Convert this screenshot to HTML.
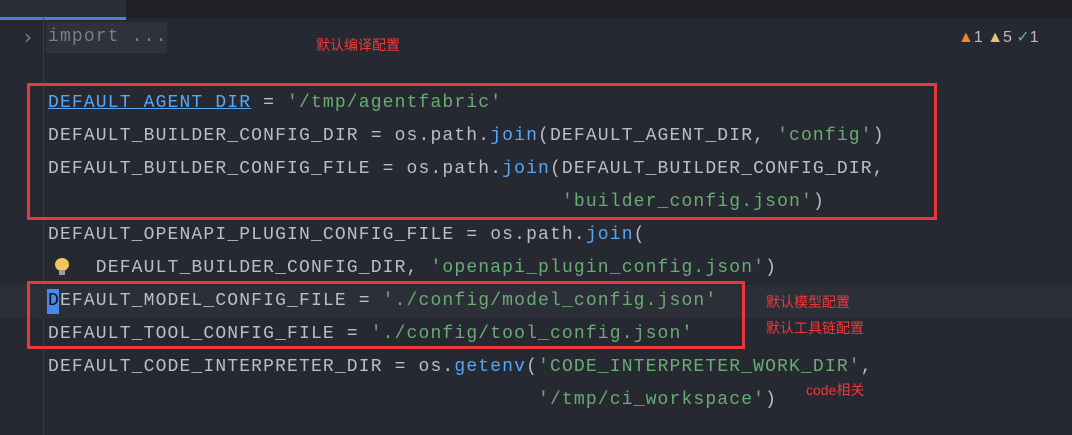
<!DOCTYPE html>
<html><head><meta charset="utf-8"><style>
html,body{margin:0;padding:0;}
body{width:1072px;height:435px;background:#262931;position:relative;overflow:hidden;font-family:"Liberation Mono",monospace;}
.top{position:absolute;left:0;top:0;width:1072px;height:18px;background:#1f2126;}
.tab{position:absolute;left:0;top:0;width:126px;height:17px;background:#2b2e36;border-bottom:3px solid #4a7fe0;}
.gut{position:absolute;left:43px;top:18px;width:1px;height:417px;background:#393b40;}
.cur{position:absolute;left:0;top:285px;width:1072px;height:33px;background:#2c2f37;}
.l{position:absolute;left:48px;font-size:18px;letter-spacing:1.15px;color:#bcbec4;white-space:pre;line-height:33px;height:33px;}
.s{color:#6aab73}.f{color:#56a8f5}.g{color:#7a7e85}
.box{position:absolute;border:3px solid #e8383b;box-sizing:border-box;}
.r{position:absolute;color:#f0383a;font-family:"Liberation Sans","Noto Sans CJK SC",sans-serif;font-size:14px;}
</style></head><body>
<div class="top"></div><div class="tab"></div>
<div class="gut"></div>
<div class="cur"></div>
<div style="position:absolute;left:46px;top:22px;width:121px;height:31px;background:#2f323a"></div>
<div style="position:absolute;left:24px;top:25px;color:#7a7e85;font-size:20px;font-family:'DejaVu Sans',sans-serif">›</div>
<div class="l g" style="top:21px">import ...</div>
<div class="l" style="top:87px"><span class="f" style="text-decoration:underline">DEFAULT_AGENT_DIR</span> = <span class="s">'/tmp/agentfabric'</span></div>
<div class="l" style="top:120px">DEFAULT_BUILDER_CONFIG_DIR = os.path.<span class="f">join</span>(DEFAULT_AGENT_DIR, <span class="s">'config'</span>)</div>
<div class="l" style="top:153px">DEFAULT_BUILDER_CONFIG_FILE = os.path.<span class="f">join</span>(DEFAULT_BUILDER_CONFIG_DIR,</div>
<div class="l" style="top:186px">                                           <span class="s">'builder_config.json'</span>)</div>
<div class="l" style="top:219px">DEFAULT_OPENAPI_PLUGIN_CONFIG_FILE = os.path.<span class="f">join</span>(</div>
<div class="l" style="top:252px">    DEFAULT_BUILDER_CONFIG_DIR, <span class="s">'openapi_plugin_config.json'</span>)</div>
<div style="position:absolute;left:55px;top:258px;width:14px;height:13px;border-radius:50%;background:#f2c55c"></div>
<div style="position:absolute;left:59px;top:270px;width:6px;height:5px;background:#9a9a9a"></div>
<div style="position:absolute;left:47px;top:289px;width:12px;height:25px;background:#4a88f0"></div>
<div class="l" style="top:285px"><span style="color:#111">D</span>EFAULT_MODEL_CONFIG_FILE = <span class="s">'./config/model_config.json'</span></div>
<div class="l" style="top:318px">DEFAULT_TOOL_CONFIG_FILE = <span class="s">'./config/tool_config.json'</span></div>
<div class="l" style="top:351px">DEFAULT_CODE_INTERPRETER_DIR = os.<span class="f">getenv</span>(<span class="s">'CODE_INTERPRETER_WORK_DIR'</span>,</div>
<div class="l" style="top:384px">                                         <span class="s">'/tmp/ci_workspace'</span>)</div>
<div class="box" style="left:27px;top:83px;width:910px;height:137px"></div>
<div class="box" style="left:27px;top:281px;width:718px;height:68px"></div>
<div class="r" style="left:316px;top:35px">默认编译配置</div>
<div class="r" style="left:766px;top:292px">默认模型配置</div>
<div class="r" style="left:766px;top:318px">默认工具链配置</div>
<div class="r" style="left:806px;top:380px">code相关</div>
<div style="position:absolute;left:958px;top:27px;font-family:'Liberation Sans','DejaVu Sans',sans-serif;font-size:16px;color:#bcbec4;white-space:pre"><span style="color:#f08a1e">▲</span>1 <span style="color:#e8c17a">▲</span>5 <span style="color:#5fb865">✓</span>1</div>
</body></html>
